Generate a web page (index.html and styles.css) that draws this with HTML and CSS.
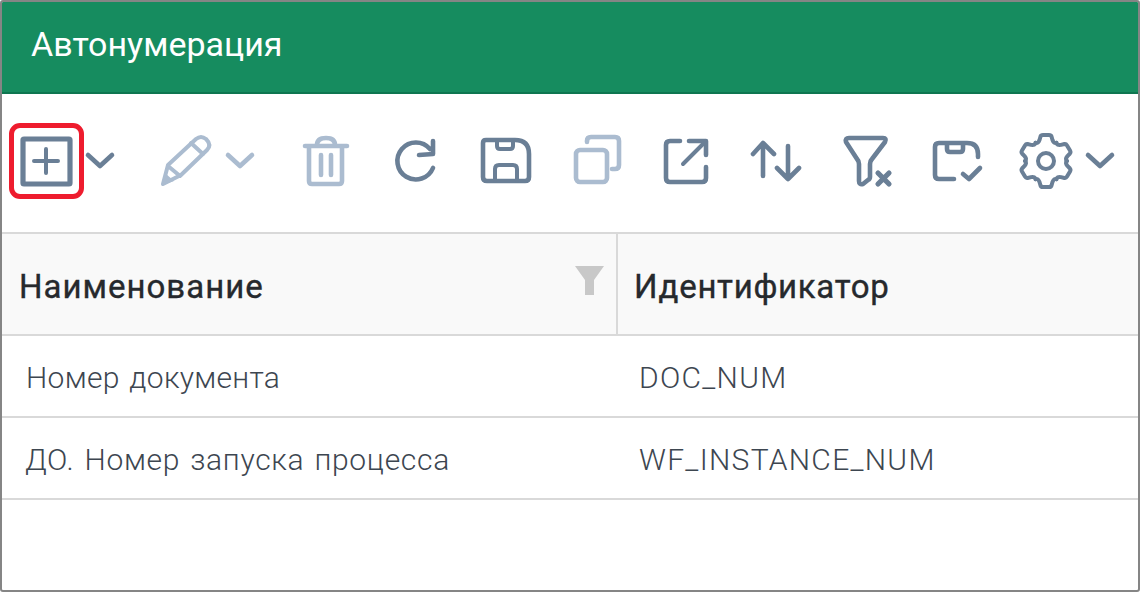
FILE: index.html
```html
<!DOCTYPE html>
<html lang="ru">
<head>
<meta charset="utf-8">
<title>Автонумерация</title>
<link rel="stylesheet" href="styles.css">
</head>
<body>
<main class="window">
  <header class="titlebar">Автонумерация</header>
  <div class="toolbar">
    <span class="add-focus"></span>
    <svg class="tool c-add" viewBox="9 124 75 76"><rect class="heavy" x="23" y="140" width="47" height="45" rx="1"/><path d="M46 150V174M34 162H58"/></svg>
    <svg class="tool c-chev1" viewBox="84 124 34 76"><path class="thick" d="M88 156L100 167L112 156"/></svg>
    <svg class="tool c-edit off" viewBox="118 124 102 76"><path d="M163 185L168 166L196 140Q201 136 206 140Q212 146 207 151L181 176Z"/><path d="M191 144L203 155M168 167L180 177"/><path class="solid" d="M162 186L165 174L174 182Z"/></svg>
    <svg class="tool c-chev2 off" viewBox="220 124 40 76"><path class="thick" d="M228 156L240 167L252 156"/></svg>
    <svg class="tool c-trash off" viewBox="260 124 112 76"><path class="thick" d="M305 147H347M317 146Q317 139 326 139Q335 139 335 146M309 148V182Q309 185 312 185H339Q342 185 342 182V148M321 156V176M331 156V176"/></svg>
    <svg class="tool c-refresh" viewBox="372 124 86 76"><path class="thick" d="M433 169A18.500 18.500 0 1 1 430 150M433 142V155L419 156"/></svg>
    <svg class="tool c-save" viewBox="458 124 94 76"><path class="thick" d="M486 141H515Q529 141 529 155V178Q529 182 525 182H487Q483 182 483 178V144Q483 141 486 141Z"/><path d="M497 142V147Q497 150 500 150H510Q513 150 513 147V142M495 182V170Q495 166 499 166H513Q517 166 517 170V182"/></svg>
    <svg class="tool c-copy off" viewBox="552 124 90 76"><rect class="thick" x="576" y="151" width="31" height="32" rx="4"/><path class="thick" d="M587 143V142Q587 138 591 138H615Q619 138 619 142V166Q619 170 615 170H612"/></svg>
    <svg class="tool c-export" viewBox="642 124 88 76"><path class="thick" d="M680 142H670Q666 142 666 146V179Q666 183 670 183H702Q706 183 706 179V168"/><path d="M683 165L705 143"/><path class="thick" d="M689 142H706V156"/></svg>
    <svg class="tool c-sort" viewBox="730 124 92 76"><path class="thick" d="M763 177V144M753 155L763 144L774 155M788 147V180M777 169L788 180L799 169"/></svg>
    <svg class="tool c-clear" viewBox="822 124 90 76"><path class="thick" d="M849 139H883Q887 139 885 143L872 160Q870 162 870 165V178Q870 180 868 181L863 185Q859 186 859 182V165Q859 162 857 160L846 143Q845 139 849 139Z"/><path class="heavy" d="M878 174L889 185M889 174L878 185"/></svg>
    <svg class="tool c-apply" viewBox="912 124 88 76"><path class="thick" d="M978 158V155Q978 144 967 144H939Q935 144 935 148V176Q935 180 939 180H954M947 144V150Q947 153 950 153H960Q963 153 963 150V144M963 175L969 180L980 169"/></svg>
    <svg class="tool c-gear" viewBox="1000 124 78 76">
      <defs><path id="tooth" d="M1035.500 143.800Q1038 145 1039.500 141L1040.500 137.500Q1041 136 1043 136H1049Q1051 136 1051.500 137.500L1052.500 141Q1054 145 1056.500 143.800"/></defs>
      <use href="#tooth"/><use href="#tooth" transform="rotate(60 1046 162)"/><use href="#tooth" transform="rotate(120 1046 162)"/><use href="#tooth" transform="rotate(180 1046 162)"/><use href="#tooth" transform="rotate(240 1046 162)"/><use href="#tooth" transform="rotate(300 1046 162)"/>
      <circle cx="1046" cy="162" r="8"/>
    </svg>
    <svg class="tool c-chev3" viewBox="1078 124 42 76"><path class="thick" d="M1088 156L1100 167L1112 156"/></svg>
  </div>
  <div class="grid">
    <div class="row head">
      <div class="cell name">Наименование
        <svg class="head-filter" viewBox="0 0 29 29"><path d="M0 0H29L19 14V29H10V14Z"/></svg>
      </div>
      <div class="cell code">Идентификатор</div>
    </div>
    <div class="row">
      <div class="cell name">Номер документа</div>
      <div class="cell code">DOC_NUM</div>
    </div>
    <div class="row">
      <div class="cell name long">ДО. Номер запуска процесса</div>
      <div class="cell code">WF_INSTANCE_NUM</div>
    </div>
  </div>
</main>
</body>
</html>
```
FILE: styles.css
```css
* { box-sizing: border-box; }
html, body { margin: 0; padding: 0; background: #fff; }
body { font-family: Roboto, "Noto Sans", sans-serif; }
.window {
  width: 1140px;
  height: 592px;
  border: 2px solid #858585;
  border-radius: 3px;
  overflow: hidden;
  background: #fff;
}
.titlebar {
  height: 93px;
  margin-top: -1px;
  padding: 24px 0 0 29px;
  background: #168c5f;
  border-bottom: 2px solid #0f7650;
  color: #fff;
  font-size: 34px;
  line-height: 38px;
}
.toolbar {
  position: relative;
  display: flex;
  height: 138px;
  padding: 29px 0 0 7px;
}
.add-focus {
  position: absolute;
  left: 7px;
  top: 29px;
  width: 75px;
  height: 76px;
  border: 5px solid #ee1c2e;
  border-radius: 11px;
}
.tool {
  display: block;
  height: 76px;
  fill: none;
  stroke: #6a7f96;
  stroke-width: 4;
  stroke-linecap: round;
  stroke-linejoin: round;
}
.tool.off { stroke: #abbcd0; }
.thick { stroke-width: 4.6; }
.heavy { stroke-width: 5.2; }
.solid { fill: #abbcd0; stroke: none; }
.c-add { width: 75px; }
.c-chev1 { width: 34px; }
.c-edit { width: 102px; }
.c-chev2 { width: 40px; }
.c-trash { width: 112px; }
.c-refresh { width: 86px; }
.c-save { width: 94px; }
.c-copy { width: 90px; }
.c-export { width: 88px; }
.c-sort { width: 92px; }
.c-clear { width: 90px; }
.c-apply { width: 88px; }
.c-gear { width: 78px; }
.c-chev3 { width: 42px; }
.grid { border-top: 2px solid #d9d9d9; }
.row {
  display: grid;
  grid-template-columns: 616px 1fr;
  height: 82px;
  border-bottom: 2px solid #d9d9d9;
  color: #3d4650;
  font-size: 30px;
  font-weight: 300;
  letter-spacing: 0.3px;
  word-spacing: 2px;
}
.cell {
  position: relative;
  height: 80px;
  padding-top: 1px;
  padding-left: 24px;
  line-height: 82px;
  white-space: nowrap;
}
.cell.long { padding-left: 23px; letter-spacing: 0.7px; }
.cell.code { padding-left: 21px; letter-spacing: 1.3px; }
.row.head {
  height: 102px;
  background: #f9f9f9;
  color: #26292d;
  font-size: 33px;
  font-weight: 400;
  letter-spacing: 1px;
  word-spacing: 0;
  -webkit-text-stroke: 0.35px #26292d;
}
.head .cell { height: 100px; padding-top: 2px; line-height: 102px; }
.head .name { padding-left: 17px; border-right: 2px solid #d9d9d9; }
.head .code { padding-left: 16px; letter-spacing: 0.7px; }
.head-filter {
  position: absolute;
  right: 12px;
  top: 32px;
  width: 29px;
  height: 29px;
  fill: #c8c8c8;
  stroke: none;
}
```
